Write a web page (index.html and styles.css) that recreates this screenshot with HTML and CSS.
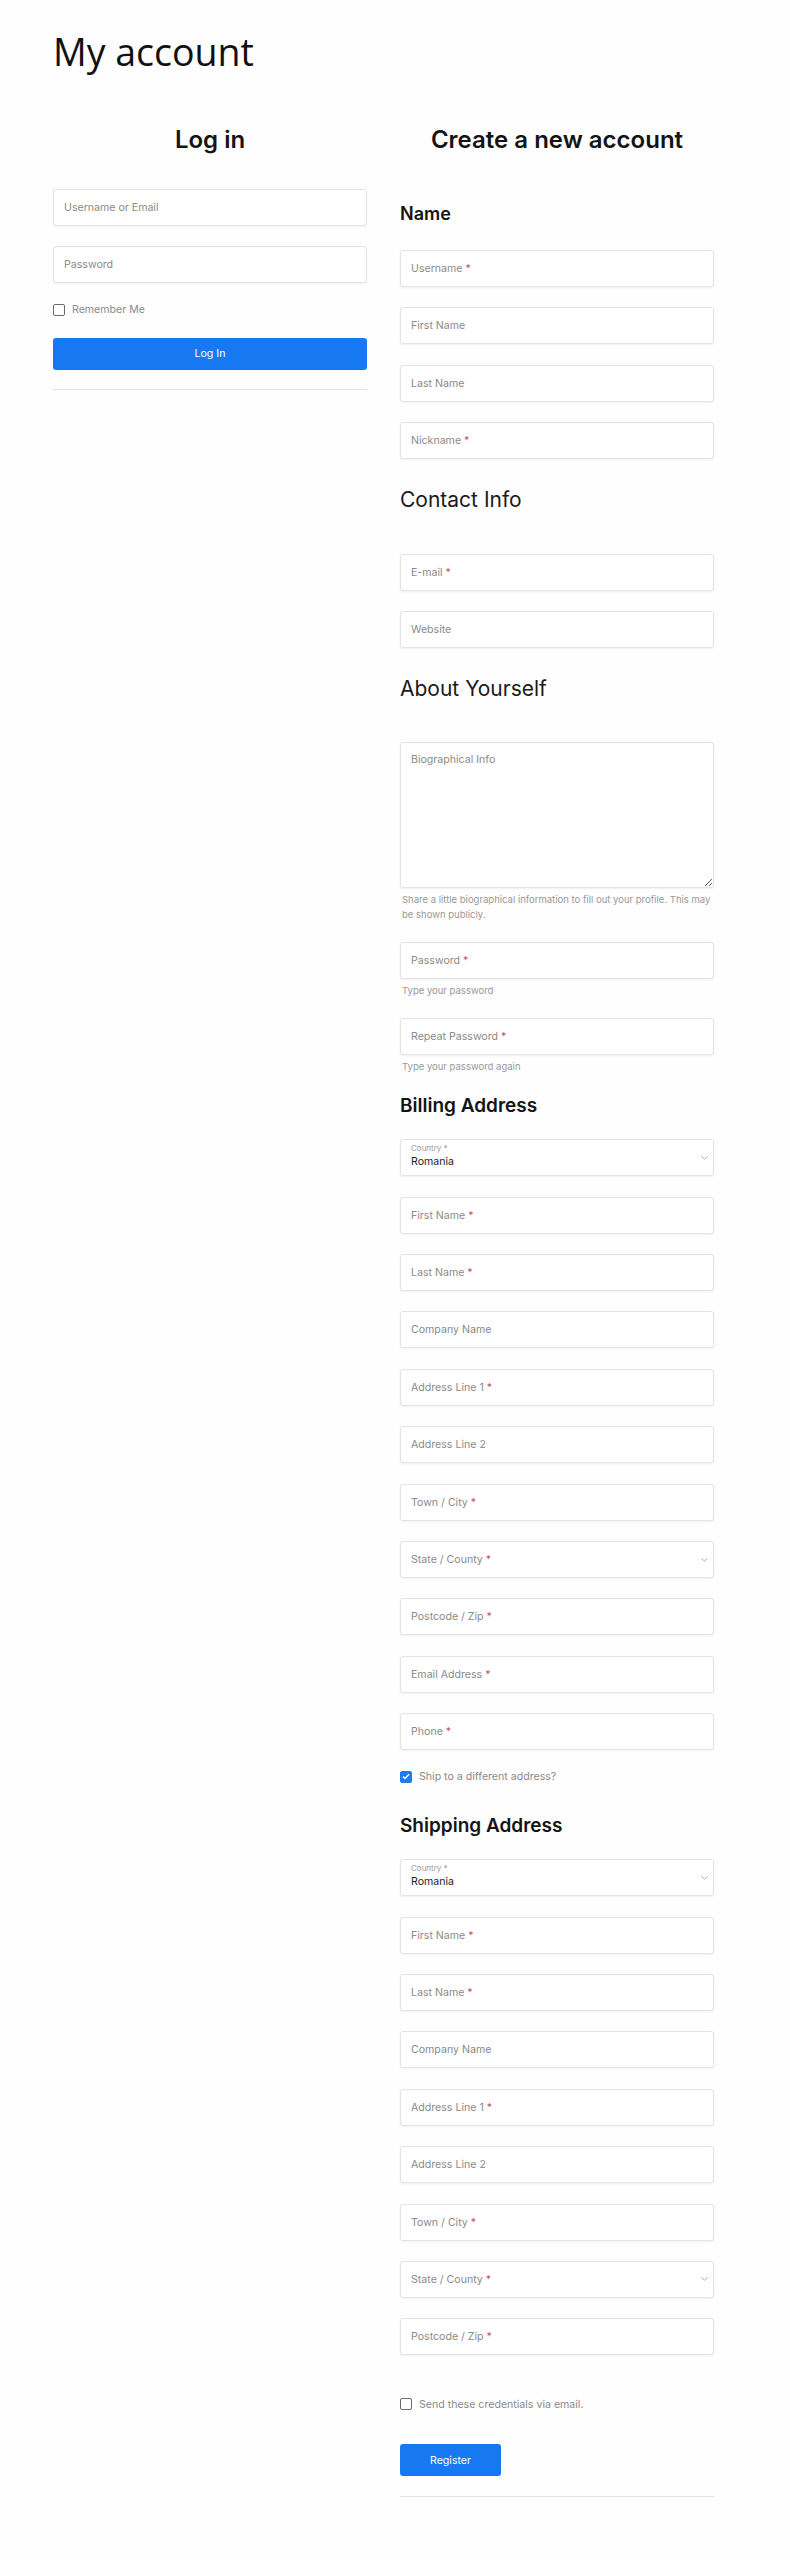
FILE: index.html
```
<!DOCTYPE html>
<html lang="en">
<head>
<meta charset="utf-8">
<title>My account</title>
<link rel="stylesheet" href="styles.css">
</head>
<body>
<div class="page">
  <h1 class="title">My account</h1>
  <div class="columns">
    <section class="col">
      <h2 class="col-title">Log in</h2>
      <div class="login-form">
        <div class="field"><div class="input">Username or Email</div></div>
        <div class="field"><div class="input">Password</div></div>
        <div class="check"><span class="box"></span><span>Remember Me</span></div>
        <div class="btn btn-block">Log In</div>
        <div class="rule"></div>
      </div>
    </section>

    <section class="col">
      <h2 class="col-title">Create a new account</h2>

      <h3 class="sec sec-name">Name</h3>
      <div class="field"><div class="input">Username <span class="req">*</span></div></div>
      <div class="field"><div class="input">First Name</div></div>
      <div class="field"><div class="input">Last Name</div></div>
      <div class="field"><div class="input">Nickname <span class="req">*</span></div></div>

      <h3 class="sec-light">Contact Info</h3>
      <div class="field"><div class="input">E-mail <span class="req">*</span></div></div>
      <div class="field"><div class="input">Website</div></div>

      <h3 class="sec-light">About Yourself</h3>
      <div class="field">
        <textarea class="textarea" placeholder="Biographical Info"></textarea>
        <p class="help">Share a little biographical information to fill out your profile. This may be shown publicly.</p>
      </div>
      <div class="field">
        <div class="input">Password <span class="req">*</span></div>
        <p class="help">Type your password</p>
      </div>
      <div class="field">
        <div class="input">Repeat Password <span class="req">*</span></div>
        <p class="help">Type your password again</p>
      </div>

      <h3 class="sec sec-billing">Billing Address</h3>
      <div class="field">
        <div class="input select">
          <div class="select-text">
            <span class="select-label">Country *</span>
            <span class="select-value">Romania</span>
          </div>
          <svg class="chev" width="7" height="4" viewBox="0 0 7 4"><path d="M0.5 0.5L3.5 3.2L6.5 0.5" fill="none" stroke="#a0a0a0" stroke-width="0.9"/></svg>
        </div>
      </div>
      <div class="field"><div class="input">First Name <span class="req">*</span></div></div>
      <div class="field"><div class="input">Last Name <span class="req">*</span></div></div>
      <div class="field"><div class="input">Company Name</div></div>
      <div class="field"><div class="input">Address Line 1 <span class="req">*</span></div></div>
      <div class="field"><div class="input">Address Line 2</div></div>
      <div class="field"><div class="input">Town / City <span class="req">*</span></div></div>
      <div class="field"><div class="input select"><span>State / County <span class="req">*</span></span><svg class="chev" width="7" height="4" viewBox="0 0 7 4"><path d="M0.5 0.5L3.5 3.2L6.5 0.5" fill="none" stroke="#a0a0a0" stroke-width="0.9"/></svg></div></div>
      <div class="field"><div class="input">Postcode / Zip <span class="req">*</span></div></div>
      <div class="field"><div class="input">Email Address <span class="req">*</span></div></div>
      <div class="field"><div class="input">Phone <span class="req">*</span></div></div>
      <div class="check check-ship"><span class="box box-checked"><svg width="8" height="7" viewBox="0 0 8 7"><path d="M1 3.6L3 5.5L7 1.2" fill="none" stroke="#fff" stroke-width="1.4"/></svg></span><span>Ship to a different address?</span></div>

      <h3 class="sec sec-shipping">Shipping Address</h3>
      <div class="field">
        <div class="input select">
          <div class="select-text">
            <span class="select-label">Country *</span>
            <span class="select-value">Romania</span>
          </div>
          <svg class="chev" width="7" height="4" viewBox="0 0 7 4"><path d="M0.5 0.5L3.5 3.2L6.5 0.5" fill="none" stroke="#a0a0a0" stroke-width="0.9"/></svg>
        </div>
      </div>
      <div class="field"><div class="input">First Name <span class="req">*</span></div></div>
      <div class="field"><div class="input">Last Name <span class="req">*</span></div></div>
      <div class="field"><div class="input">Company Name</div></div>
      <div class="field"><div class="input">Address Line 1 <span class="req">*</span></div></div>
      <div class="field"><div class="input">Address Line 2</div></div>
      <div class="field"><div class="input">Town / City <span class="req">*</span></div></div>
      <div class="field"><div class="input select"><span>State / County <span class="req">*</span></span><svg class="chev" width="7" height="4" viewBox="0 0 7 4"><path d="M0.5 0.5L3.5 3.2L6.5 0.5" fill="none" stroke="#a0a0a0" stroke-width="0.9"/></svg></div></div>
      <div class="field"><div class="input">Postcode / Zip <span class="req">*</span></div></div>

      <div class="check check-send"><span class="box"></span><span>Send these credentials via email.</span></div>
      <div class="btn btn-register">Register</div>
      <div class="rule rule-register"></div>
    </section>
  </div>
</div>
</body>
</html>
```
FILE: styles.css
```
html, body {
  margin: 0;
  padding: 0;
  background: #fefefe;
}

body {
  font-family: Inter, "Noto Sans", sans-serif;
  color: #111;
}

.page {
  width: 661px;
  padding: 1px 76px 60px 53px;
}

.title {
  margin: 29px 0 0 0;
  font-family: "Open Sans", sans-serif;
  font-weight: 400;
  font-size: 37.5px;
  line-height: 44px;
  color: #111;
}

.columns {
  display: grid;
  grid-template-columns: 314px 314px;
  column-gap: 33px;
  margin-top: 51px;
  align-items: start;
}

.col {
  display: flex;
  flex-direction: column;
}

.col-title {
  margin: 0;
  font-size: 24px;
  line-height: 30px;
  font-weight: 600;
  text-align: center;
  color: #141414;
}

.login-form {
  display: flex;
  flex-direction: column;
  padding-top: 34px;
}

.field {
  margin-bottom: 20.4px;
}

.input {
  box-sizing: border-box;
  height: 37px;
  display: flex;
  align-items: center;
  padding: 0 10px;
  background: #fff;
  border: 1px solid #e3e3e3;
  border-radius: 3px;
  box-shadow: 0 1px 2px rgba(0, 0, 0, 0.05);
  font-size: 10.6px;
  color: #8a8a8a;
  white-space: pre;
}

.req {
  color: #c4534e;
}

.select {
  justify-content: space-between;
  padding-right: 5px;
}

.select-text {
  display: flex;
  flex-direction: column;
  align-self: flex-start;
  padding-top: 3px;
}

.select-label {
  font-size: 8px;
  line-height: 10px;
  color: #999;
  margin-bottom: 2px;
}

.select-value {
  font-size: 10.6px;
  line-height: 14px;
  color: #222;
}

.chev {
  display: block;
}

.textarea {
  display: block;
  box-sizing: border-box;
  width: 100%;
  height: 146px;
  margin: 0;
  padding: 9px 10px;
  background: #fff;
  border: 1px solid #e3e3e3;
  border-radius: 3px;
  box-shadow: 0 1px 2px rgba(0, 0, 0, 0.05);
  font-family: Inter, sans-serif;
  font-size: 10.6px;
  line-height: 15.9px;
  color: #333;
}

.textarea::placeholder {
  color: #8a8a8a;
}

.help {
  margin: 3.5px 0 0 2px;
  font-size: 9.5px;
  line-height: 15px;
  color: #999;
}

.sec {
  margin: 0;
  font-weight: 600;
  color: #141414;
}

.sec-name {
  font-size: 18px;
  line-height: 24px;
  margin: 46.5px 0 24.5px;
}

.sec-billing,
.sec-shipping {
  font-size: 19px;
  line-height: 24px;
}

.sec-billing {
  margin: 0 0 21.3px;
}

.sec-shipping {
  margin: 31.6px 0 21px;
}

.sec-light {
  margin: 7.5px 0 40.5px;
  font-size: 21px;
  line-height: 26px;
  font-weight: 400;
  color: #1a1a1a;
}

.check {
  display: flex;
  align-items: center;
  gap: 7px;
  height: 12px;
  font-size: 10.6px;
  color: #8a8a8a;
}

.box {
  box-sizing: border-box;
  width: 12px;
  height: 12px;
  border: 1.3px solid #6b6b6b;
  border-radius: 2px;
  display: flex;
  align-items: center;
  justify-content: center;
  flex: none;
}

.box-checked {
  background: #1a7ef2;
  border-color: #1a7ef2;
}

.box-checked svg {
  display: block;
}

.check-send {
  margin-top: 22.4px;
}

.btn {
  box-sizing: border-box;
  height: 32px;
  display: flex;
  align-items: center;
  justify-content: center;
  background: #1779f2;
  color: #fff;
  border-radius: 3px;
  font-size: 10.6px;
}

.btn-block {
  margin-top: 22px;
}

.btn-register {
  margin-top: 34px;
  width: 101px;
}

.rule {
  height: 1px;
  background: #e2e2e2;
  margin-top: 19px;
}

.rule-register {
  margin-top: 20px;
}
```
